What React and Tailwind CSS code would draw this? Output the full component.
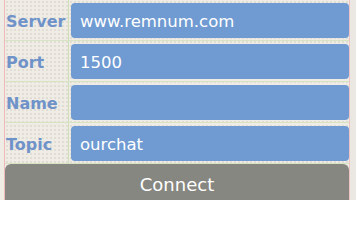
import React from 'react'

const rows = [
  { label: 'Server', value: 'www.remnum.com' },
  { label: 'Port', value: '1500' },
  { label: 'Name', value: '' },
  { label: 'Topic', value: 'ourchat' },
]

const App = () => {
  return (
    <div className="w-[356px] h-[200px] overflow-hidden bg-[#efece6] flex" style={{ fontFamily: '"DejaVu Sans", sans-serif' }}>
      <div className="w-[5px] border-r border-[#f0b8b8] shrink-0" />
      <div className="w-[344px] flex flex-col bg-[radial-gradient(#e2ddd4_1px,transparent_1px)] bg-[length:4px_4px]">
        {rows.map((row) => (
          <div key={row.label} className="h-[41px] flex border-b border-[#d6e4c4]">
            <div className="w-[64px] border-r border-[#cfe0b8] flex items-center pl-[1px] pt-[3px]">
              <span className="text-[16px] font-bold text-[#6f93c9]">{row.label}</span>
            </div>
            <div className="flex-1 pl-[2px] pt-[3px] pb-[2px]">
              <div className="h-full bg-[#6f9bd2] rounded-[4px] flex items-center pl-[9px] pt-[3px] text-white text-[16.5px]">
                {row.value}
              </div>
            </div>
          </div>
        ))}
        <div className="flex-1 bg-[#878781] rounded-t-[6px] flex items-center justify-center pt-[4px] text-white text-[18px]">
          Connect
        </div>
      </div>
      <div className="w-[7px] border-l border-[#f0c4c4] bg-[#ebe8e4] shrink-0" />
    </div>
  )
}

export default App
